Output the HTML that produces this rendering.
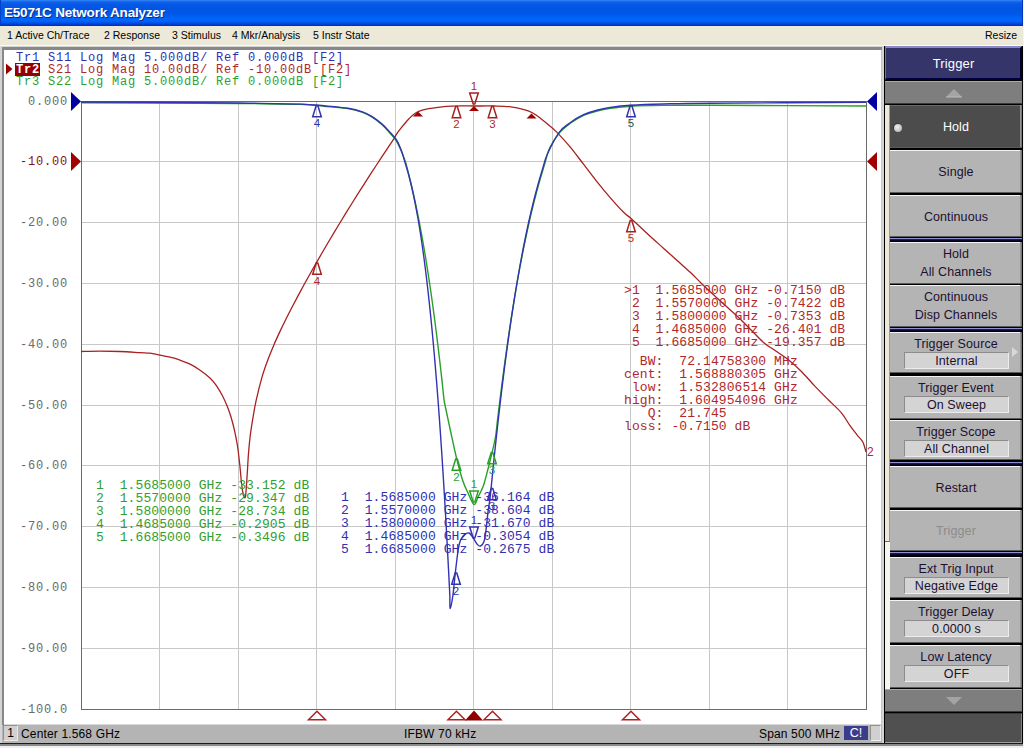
<!DOCTYPE html><html><head><meta charset="utf-8"><style>
*{margin:0;padding:0;box-sizing:border-box}
html,body{width:1024px;height:748px;overflow:hidden;background:#fff;font-family:"Liberation Sans",sans-serif}
.a{position:absolute}
#title{left:0;top:0;width:1024px;height:26px;background:linear-gradient(#3b8cf5 0px,#1e6cf0 1px,#0a5ce8 3px,#0055e3 8px,#0058e8 14px,#0063f8 18px,#0066fd 21px,#0050e0 23px,#0036c8 25px,#0030b0 26px)}
#title span{position:absolute;left:4px;top:5px;color:#fff;font-weight:bold;font-size:13.5px;letter-spacing:-0.2px;text-shadow:1px 1px 0 #0a2c8c;white-space:nowrap}
#menu{left:0;top:26px;width:1024px;height:19px;background:#ece9d8}
#menu span{position:absolute;top:3px;font-size:10.5px;color:#000;white-space:nowrap}
.mono{position:absolute;font-family:"Liberation Mono",monospace;font-size:12px;letter-spacing:0.7px;white-space:pre;line-height:13px}
.b{position:absolute;left:890px;width:132px;background:#b4b4b4;color:#1c1030;font-size:12.5px;letter-spacing:0.1px;text-align:center;white-space:nowrap}
.b .t{position:absolute;left:0;right:0;top:0;height:1px;background:#f4f4f4}
.b .r{position:absolute;right:0;top:0;bottom:0;width:2px;background:linear-gradient(90deg,#a0a0a0,#6a6a6a)}
.b .d{position:absolute;left:0;right:0;bottom:0;height:1px;background:#5a5a5a}
.b .l1{position:absolute;left:0;right:0;white-space:nowrap}
.v{position:absolute;left:14px;width:105px;height:17px;background:#d4d4d4;border-top:1px solid #8c8c8c;border-left:1px solid #8c8c8c;border-bottom:1px solid #ececec;border-right:1px solid #ececec;line-height:17px}
</style></head><body>
<div id="title" class="a"><div style="position:absolute;left:0;top:0;width:1px;height:26px;background:#0040c8"></div><span>E5071C Network Analyzer</span></div>
<div id="menu" class="a">
<span style="left:7px">1 Active Ch/Trace</span>
<span style="left:104px">2 Response</span>
<span style="left:172px">3 Stimulus</span>
<span style="left:232px">4 Mkr/Analysis</span>
<span style="left:313px">5 Instr State</span>
<span style="left:985px">Resize</span>
</div>
<div class="a" style="left:0;top:45px;width:884px;height:703px;background:#d4d4d4"></div>
<div class="a" style="left:0;top:45px;width:884px;height:1px;background:#fafafa"></div>
<div class="a" style="left:2px;top:47px;width:880px;height:695px;background:#888"></div>
<div class="a" style="left:4px;top:50px;width:877px;height:674px;background:#fff"></div>
<div class="a" style="left:881px;top:50px;width:1px;height:692px;background:#c8c8c8"></div>
<div class="a" style="left:4px;top:724px;width:877px;height:1px;background:#d8d8d8"></div>
<div class="a" style="left:2px;top:725px;width:880px;height:18px;background:#b4b4b4"></div>
<div class="a" style="left:0;top:743px;width:1024px;height:1px;background:#1a1a1a"></div>
<div class="a" style="left:0;top:744px;width:1024px;height:2px;background:#8a8a8a"></div>
<div class="a" style="left:0;top:746px;width:1024px;height:2px;background:#f0f0f0"></div>
<div class="a" style="left:884px;top:45px;width:140px;height:1px;background:#fafafa"></div>
<div class="a" style="left:884px;top:46px;width:139px;height:697px;background:#000"></div>
<div class="a" style="left:1023px;top:46px;width:1px;height:697px;background:#f0f0f0"></div>
<div class="a" style="left:885px;top:46px;width:137px;height:34px;background:#35356a;border-top:2px solid #8a8ac8;border-left:1px solid #7070b0;border-bottom:2px solid #000040;border-right:2px solid #000030"></div>
<div class="a" style="left:885px;top:56px;width:137px;text-align:center;color:#fff;font-size:13px;letter-spacing:0.15px">Trigger</div>
<div class="a" style="left:885px;top:81px;width:137px;height:23px;background:#7e7e7e;border-top:1px solid #a8a8a8;border-bottom:1px solid #3a3a3a"></div>
<svg class="a" style="left:945px;top:88px" width="18" height="10"><polygon points="1,9 9,1 17,9" fill="#a4a4a4"/><line x1="1" y1="9" x2="17" y2="9" stroke="#bcbcbc" stroke-width="1"/></svg>
<div class="a" style="left:885px;top:105px;width:5px;height:584px;background:#f6f5ee"></div>
<div class="a" style="left:885px;top:105px;width:5px;height:437px;background:#ece9d8;border-right:1px solid #9a9a90;border-bottom:1px solid #6a6a60"></div>
<div class="a" style="left:890px;top:238px;width:132px;height:1px;background:#9090d0"></div>
<div class="a" style="left:890px;top:239px;width:132px;height:2px;background:linear-gradient(#20206a,#000010)"></div>
<div class="a" style="left:890px;top:328px;width:132px;height:1px;background:#9090d0"></div>
<div class="a" style="left:890px;top:329px;width:132px;height:2px;background:linear-gradient(#20206a,#000010)"></div>
<div class="a" style="left:890px;top:462px;width:132px;height:1px;background:#9090d0"></div>
<div class="a" style="left:890px;top:463px;width:132px;height:2px;background:linear-gradient(#20206a,#000010)"></div>
<div class="a" style="left:890px;top:552px;width:132px;height:1px;background:#9090d0"></div>
<div class="a" style="left:890px;top:553px;width:132px;height:2px;background:linear-gradient(#20206a,#000010)"></div>
<div class="b" style="top:105px;height:43px;background:#4c4c4c;color:#ffffff"><div class="t" style="background:#6a6a6a"></div><div class="r"></div><div class="d"></div><div class="l1" style="top:1px;line-height:43px">Hold</div><div style="position:absolute;left:4px;top:19px;width:8px;height:8px;border-radius:50%;background:radial-gradient(circle at 40% 40%,#f0f0f0,#c8c8c8 55%,#9a9a9a);box-shadow:-0.5px -0.5px 0 #202020"></div></div>
<div class="b" style="top:150px;height:43px;background:#b4b4b4;color:#1c1030"><div class="t" style="background:#f4f4f4"></div><div class="r"></div><div class="d"></div><div class="l1" style="top:1px;line-height:43px">Single</div></div>
<div class="b" style="top:195px;height:42px;background:#b4b4b4;color:#1c1030"><div class="t" style="background:#f4f4f4"></div><div class="r"></div><div class="d"></div><div class="l1" style="top:1px;line-height:42px">Continuous</div></div>
<div class="b" style="top:242px;height:42px;background:#b4b4b4;color:#1c1030"><div class="t" style="background:#f4f4f4"></div><div class="r"></div><div class="d"></div><div class="l1" style="top:5px">Hold</div><div class="l1" style="top:23px">All Channels</div></div>
<div class="b" style="top:285px;height:42px;background:#b4b4b4;color:#1c1030"><div class="t" style="background:#f4f4f4"></div><div class="r"></div><div class="d"></div><div class="l1" style="top:5px">Continuous</div><div class="l1" style="top:23px">Disp Channels</div></div>
<div class="b" style="top:332px;height:41px;background:#b4b4b4;color:#1c1030"><div class="t" style="background:#f4f4f4"></div><div class="r"></div><div class="d"></div><div class="l1" style="top:5px">Trigger Source</div><div class="v" style="top:20px">Internal</div></div>
<div class="b" style="top:376px;height:43px;background:#b4b4b4;color:#1c1030"><div class="t" style="background:#f4f4f4"></div><div class="r"></div><div class="d"></div><div class="l1" style="top:5px">Trigger Event</div><div class="v" style="top:20px">On Sweep</div></div>
<div class="b" style="top:420px;height:40px;background:#b4b4b4;color:#1c1030"><div class="t" style="background:#f4f4f4"></div><div class="r"></div><div class="d"></div><div class="l1" style="top:5px">Trigger Scope</div><div class="v" style="top:20px">All Channel</div></div>
<div class="b" style="top:466px;height:42px;background:#b4b4b4;color:#1c1030"><div class="t" style="background:#f4f4f4"></div><div class="r"></div><div class="d"></div><div class="l1" style="top:1px;line-height:42px">Restart</div></div>
<div class="b" style="top:510px;height:41px;background:#b4b4b4;color:#8c8c8c"><div class="t" style="background:#f4f4f4"></div><div class="r"></div><div class="d"></div><div class="l1" style="top:1px;line-height:41px">Trigger</div></div>
<div class="b" style="top:557px;height:41px;background:#b4b4b4;color:#1c1030"><div class="t" style="background:#f4f4f4"></div><div class="r"></div><div class="d"></div><div class="l1" style="top:5px">Ext Trig Input</div><div class="v" style="top:20px">Negative Edge</div></div>
<div class="b" style="top:600px;height:43px;background:#b4b4b4;color:#1c1030"><div class="t" style="background:#f4f4f4"></div><div class="r"></div><div class="d"></div><div class="l1" style="top:5px">Trigger Delay</div><div class="v" style="top:20px">0.0000 s</div></div>
<div class="b" style="top:645px;height:43px;background:#b4b4b4;color:#1c1030"><div class="t" style="background:#f4f4f4"></div><div class="r"></div><div class="d"></div><div class="l1" style="top:5px">Low Latency</div><div class="v" style="top:20px">OFF</div></div>
<svg class="a" style="left:1011px;top:346px" width="8" height="12"><polygon points="1,1 7,6 1,11" fill="#d8d8d8"/></svg>
<div class="a" style="left:885px;top:689px;width:137px;height:23px;background:#7e7e7e;border-top:1px solid #a8a8a8;border-bottom:1px solid #3a3a3a"></div>
<svg class="a" style="left:945px;top:696px" width="18" height="10"><polygon points="1,1 9,9 17,1" fill="#a4a4a4"/></svg>
<div class="a" style="left:885px;top:713px;width:137px;height:30px;background:#505050;border-top:1px solid #3a3a3a;border-bottom:1px solid #a0a0a0;border-right:1px solid #808080"></div>
<div class="a" style="left:1022px;top:0;width:1px;height:26px;background:#0030c0"></div>
<div class="a" style="left:1023px;top:0;width:1px;height:748px;background:#f4f4f4"></div>
<div class="a" style="left:3px;top:725px;width:15px;height:16px;background:#d0d0d0;border:1px solid #e8e8e8;border-top-color:#909090;border-left-color:#909090;font-size:12px;line-height:14px;text-align:center;color:#000">1</div>
<div class="a" style="left:21px;top:727px;font-size:12px;letter-spacing:0.15px;color:#000;white-space:nowrap">Center 1.568 GHz</div>
<div class="a" style="left:404px;top:727px;font-size:12px;letter-spacing:0.15px;color:#000;white-space:nowrap">IFBW 70 kHz</div>
<div class="a" style="left:759px;top:727px;font-size:12px;letter-spacing:0.15px;color:#000;white-space:nowrap">Span 500 MHz</div>
<div class="a" style="left:844px;top:726px;width:24px;height:14px;background:#3c3c8c;color:#fff;font-size:12.5px;line-height:14px;text-align:center">C!</div>
<div class="a" style="left:870px;top:725px;width:11px;height:16px;background:#d0d0d0;border:1px solid #f0f0f0;border-top-color:#909090;border-left-color:#909090"></div>
<svg class="a" style="left:0;top:0" width="1024" height="748" font-family="Liberation Mono, monospace" style="white-space:pre">
<path d="M159.5 101 V709 M238.5 101 V709 M316.5 101 V709 M395.5 101 V709 M473.5 101 V709 M552.5 101 V709 M630.5 101 V709 M709.5 101 V709 M787.5 101 V709 M81 161.5 H866 M81 222.5 H866 M81 283.5 H866 M81 344.5 H866 M81 405.5 H866 M81 465.5 H866 M81 526.5 H866 M81 587.5 H866 M81 648.5 H866" stroke="#c8c8c8" stroke-width="1" fill="none" shape-rendering="crispEdges"/>
<rect x="81.5" y="101.5" width="785" height="608" fill="none" stroke="#6a6a6a" stroke-width="1" shape-rendering="crispEdges"/>
<text x="68" y="105" fill="#6a6a6a" font-size="12" letter-spacing="0.8" text-anchor="end">0.000</text>
<text x="68" y="165" fill="#8a1010" font-size="12" letter-spacing="0.8" text-anchor="end">-10.00</text>
<text x="68" y="226" fill="#6a6a6a" font-size="12" letter-spacing="0.8" text-anchor="end">-20.00</text>
<text x="68" y="287" fill="#6a6a6a" font-size="12" letter-spacing="0.8" text-anchor="end">-30.00</text>
<text x="68" y="348" fill="#6a6a6a" font-size="12" letter-spacing="0.8" text-anchor="end">-40.00</text>
<text x="68" y="409" fill="#6a6a6a" font-size="12" letter-spacing="0.8" text-anchor="end">-50.00</text>
<text x="68" y="469" fill="#6a6a6a" font-size="12" letter-spacing="0.8" text-anchor="end">-60.00</text>
<text x="68" y="530" fill="#6a6a6a" font-size="12" letter-spacing="0.8" text-anchor="end">-70.00</text>
<text x="68" y="591" fill="#6a6a6a" font-size="12" letter-spacing="0.8" text-anchor="end">-80.00</text>
<text x="68" y="652" fill="#6a6a6a" font-size="12" letter-spacing="0.8" text-anchor="end">-90.00</text>
<text x="68" y="713" fill="#6a6a6a" font-size="12" letter-spacing="0.8" text-anchor="end">-100.0</text>
<rect x="15" y="63" width="25" height="13" fill="#960000"/>
<polygon points="6,63.5 6,74.5 12.5,69" fill="#960000"/>
<text x="16" y="61" fill="#3030b0" font-size="12" letter-spacing="0.8">Tr1&#160;S11&#160;Log&#160;Mag&#160;5.000dB/&#160;Ref&#160;0.000dB&#160;[F2]</text>
<text x="16" y="73" fill="#ffffff" font-size="12" letter-spacing="0.8" font-weight="bold">Tr2</text>
<text x="48" y="73" fill="#b02828" font-size="12" letter-spacing="0.8">S21&#160;Log&#160;Mag&#160;10.00dB/&#160;Ref&#160;-10.00dB&#160;[F2]</text>
<text x="16" y="85" fill="#30a030" font-size="12" letter-spacing="0.8">Tr3&#160;S22&#160;Log&#160;Mag&#160;5.000dB/&#160;Ref&#160;0.000dB&#160;[F2]</text>
<path fill="none" stroke="#a82020" stroke-width="1.3" stroke-linejoin="round" d="M81.00 351.50 C84.17 351.45 93.50 351.20 100.00 351.20 C106.50 351.20 113.33 351.27 120.00 351.50 C126.67 351.73 135.00 352.32 140.00 352.60 C145.00 352.88 146.67 352.77 150.00 353.20 C153.33 353.63 156.65 354.53 160.00 355.20 C163.35 355.87 166.75 356.37 170.10 357.20 C173.45 358.03 176.77 359.03 180.10 360.20 C183.43 361.37 186.77 362.53 190.10 364.20 C193.43 365.87 196.75 367.87 200.10 370.20 C203.45 372.53 207.52 375.68 210.20 378.20 C212.88 380.72 214.20 382.45 216.20 385.30 C218.20 388.15 220.37 391.80 222.20 395.30 C224.03 398.80 225.73 402.68 227.20 406.30 C228.67 409.92 229.77 412.92 231.00 417.00 C232.23 421.08 233.52 425.97 234.60 430.80 C235.68 435.63 236.63 440.30 237.50 446.00 C238.37 451.70 239.13 458.83 239.80 465.00 C240.47 471.17 240.92 478.00 241.50 483.00 C242.08 488.00 242.80 492.58 243.30 495.00 C243.80 497.42 244.10 497.50 244.50 497.50 C244.90 497.50 245.25 498.87 245.70 495.00 C246.15 491.13 246.73 481.23 247.20 474.30 C247.67 467.37 248.00 459.78 248.50 453.40 C249.00 447.02 249.48 441.78 250.20 436.00 C250.92 430.22 251.83 424.51 252.80 418.70 C253.77 412.89 254.47 408.06 256.00 401.12 C257.53 394.18 260.00 384.02 262.00 377.07 C264.00 370.12 266.00 364.83 268.00 359.43 C270.00 354.03 272.00 349.33 274.00 344.66 C276.00 339.99 278.00 335.67 280.00 331.39 C282.00 327.12 284.00 323.05 286.00 319.02 C288.00 314.99 290.00 311.09 292.00 307.23 C294.00 303.37 296.00 299.59 298.00 295.85 C300.00 292.11 302.00 288.44 304.00 284.79 C306.00 281.15 308.00 277.55 310.00 273.99 C312.00 270.42 314.00 266.90 316.00 263.40 C318.00 259.90 320.00 256.44 322.00 253.00 C324.00 249.56 326.00 246.15 328.00 242.76 C330.00 239.38 332.00 236.02 334.00 232.68 C336.00 229.35 338.00 226.04 340.00 222.75 C342.00 219.46 344.00 216.19 346.00 212.95 C348.00 209.70 350.00 206.48 352.00 203.27 C354.00 200.07 356.00 196.89 358.00 193.72 C360.00 190.56 362.00 187.41 364.00 184.29 C366.00 181.16 368.00 178.05 370.00 174.96 C372.00 171.88 374.00 168.80 376.00 165.75 C378.00 162.70 380.00 159.66 382.00 156.64 C384.00 153.62 386.00 150.62 388.00 147.63 C390.00 144.64 392.63 140.87 394.00 138.72 C395.37 136.56 395.20 136.25 396.20 134.70 C397.20 133.15 398.07 131.85 400.00 129.40 C401.93 126.95 405.20 122.73 407.80 120.00 C410.40 117.27 413.00 114.70 415.60 113.00 C418.20 111.30 420.79 110.58 423.40 109.80 C426.01 109.02 427.33 108.87 431.25 108.30 C435.17 107.73 441.69 106.80 446.90 106.40 C452.11 106.00 457.98 105.97 462.50 105.90 C467.02 105.83 468.79 105.98 474.00 106.00 C479.21 106.02 487.85 105.88 493.75 106.00 C499.65 106.12 504.19 106.07 509.40 106.70 C514.61 107.33 521.10 108.75 525.00 109.80 C528.90 110.85 530.20 111.57 532.80 113.00 C535.40 114.43 538.00 116.45 540.60 118.40 C543.20 120.35 545.72 122.42 548.40 124.70 C551.08 126.98 553.08 128.42 556.70 132.10 C560.32 135.78 565.63 141.45 570.10 146.80 C574.57 152.15 579.03 158.40 583.50 164.20 C587.97 170.00 592.45 176.03 596.90 181.60 C601.35 187.17 605.75 192.48 610.20 197.60 C614.65 202.72 620.03 208.73 623.60 212.30 C627.17 215.87 627.13 214.98 631.60 219.00 C636.07 223.02 645.05 231.50 650.40 236.40 C655.75 241.30 659.25 244.38 663.70 248.40 C668.15 252.42 672.63 256.48 677.10 260.50 C681.57 264.52 686.48 268.72 690.50 272.50 C694.52 276.28 697.50 279.60 701.20 283.20 C704.90 286.80 708.67 290.37 712.70 294.10 C716.73 297.83 721.17 301.78 725.40 305.60 C729.63 309.42 733.87 312.98 738.10 317.00 C742.33 321.02 746.57 325.47 750.80 329.70 C755.03 333.93 759.27 338.80 763.50 342.40 C767.73 346.00 771.95 348.33 776.20 351.30 C780.45 354.27 784.75 356.80 789.00 360.20 C793.25 363.60 797.47 367.47 801.70 371.70 C805.93 375.93 810.02 380.97 814.40 385.60 C818.78 390.23 823.50 394.97 828.00 399.50 C832.50 404.03 837.73 408.43 841.40 412.80 C845.07 417.17 847.33 421.95 850.00 425.70 C852.67 429.45 855.27 432.58 857.40 435.30 C859.53 438.02 861.37 439.22 862.80 442.00 C864.23 444.78 865.47 450.33 866.00 452.00"/>
<path fill="none" stroke="#28a028" stroke-width="1.4" stroke-linejoin="round" d="M81.00 102.80 C100.83 102.88 171.83 103.17 200.00 103.30 C228.17 103.43 233.33 103.43 250.00 103.60 C266.67 103.77 287.67 103.87 300.00 104.30 C312.33 104.73 315.98 105.48 324.00 106.20 C332.02 106.92 341.68 107.58 348.10 108.60 C354.52 109.62 358.48 110.87 362.50 112.30 C366.52 113.73 368.98 115.15 372.20 117.20 C375.42 119.25 379.00 122.13 381.80 124.60 C384.60 127.07 386.60 129.35 389.00 132.00 C391.40 134.65 394.20 137.42 396.20 140.50 C398.20 143.58 399.45 146.92 401.00 150.50 C402.55 154.08 404.12 157.75 405.48 162.00 C406.83 166.25 407.95 171.33 409.12 176.00 C410.29 180.67 411.41 185.33 412.49 190.00 C413.57 194.67 414.60 199.33 415.60 204.00 C416.60 208.67 417.55 213.33 418.47 218.00 C419.40 222.67 420.28 227.33 421.14 232.00 C422.01 236.67 422.83 241.33 423.64 246.00 C424.45 250.67 425.23 255.33 425.99 260.00 C426.75 264.67 427.48 269.33 428.20 274.00 C428.92 278.67 429.62 283.33 430.30 288.00 C430.98 292.67 431.64 297.33 432.29 302.00 C432.94 306.67 433.57 311.33 434.19 316.00 C434.81 320.67 435.41 325.33 436.00 330.00 C436.60 334.67 437.17 339.33 437.74 344.00 C438.31 348.67 438.87 353.33 439.41 358.00 C439.96 362.67 440.49 367.33 441.02 372.00 C441.54 376.67 442.06 381.33 442.57 386.00 C443.07 390.67 443.62 396.67 444.06 400.00 C444.50 403.33 444.16 401.00 445.20 406.00 C446.24 411.00 448.42 421.33 450.30 430.00 C452.18 438.67 454.43 449.58 456.50 458.00 C458.57 466.42 460.78 474.67 462.70 480.50 C464.62 486.33 466.12 489.00 468.00 493.00 C469.88 497.00 472.33 503.83 474.00 504.50 C475.67 505.17 476.48 499.98 478.00 497.00 C479.52 494.02 481.43 491.27 483.10 486.60 C484.77 481.93 486.42 475.03 488.00 469.00 C489.58 462.97 491.33 455.90 492.60 450.40 C493.87 444.90 494.81 441.07 495.62 436.00 C496.44 430.93 496.86 425.33 497.49 420.00 C498.12 414.67 498.76 409.33 499.42 404.00 C500.08 398.67 500.75 393.33 501.43 388.00 C502.11 382.67 502.81 377.33 503.52 372.00 C504.23 366.67 504.95 361.33 505.70 356.00 C506.44 350.67 507.20 345.33 507.97 340.00 C508.75 334.67 509.54 329.33 510.36 324.00 C511.17 318.67 512.01 313.33 512.87 308.00 C513.72 302.67 514.60 297.33 515.51 292.00 C516.42 286.67 517.34 281.33 518.31 276.00 C519.27 270.67 520.25 265.33 521.28 260.00 C522.30 254.67 523.36 249.33 524.45 244.00 C525.55 238.67 526.68 233.33 527.86 228.00 C529.04 222.67 530.26 217.33 531.54 212.00 C532.83 206.67 534.15 201.33 535.55 196.00 C536.94 190.67 538.40 185.33 539.92 180.00 C541.45 174.67 543.07 169.33 544.69 164.00 C546.32 158.67 547.18 153.23 549.67 148.00 C552.15 142.77 556.16 136.72 559.60 132.60 C563.04 128.48 566.28 126.17 570.30 123.30 C574.32 120.43 579.23 117.45 583.70 115.40 C588.17 113.35 592.65 112.17 597.10 111.00 C601.55 109.83 604.75 109.20 610.40 108.40 C616.05 107.60 622.12 106.70 631.00 106.20 C639.88 105.70 650.53 105.55 663.70 105.40 C676.87 105.25 676.28 105.20 710.00 105.30 C743.72 105.40 840.00 105.88 866.00 106.00"/>
<path fill="none" stroke="#3232b2" stroke-width="1.4" stroke-linejoin="round" d="M81.00 102.00 C100.83 102.10 171.83 102.40 200.00 102.60 C228.17 102.80 233.33 102.95 250.00 103.20 C266.67 103.45 287.67 103.67 300.00 104.10 C312.33 104.53 315.98 105.12 324.00 105.80 C332.02 106.48 341.68 107.20 348.10 108.20 C354.52 109.20 358.48 110.40 362.50 111.80 C366.52 113.20 368.98 114.58 372.20 116.60 C375.42 118.62 379.00 121.48 381.80 123.90 C384.60 126.32 386.60 128.50 389.00 131.10 C391.40 133.70 394.20 136.43 396.20 139.50 C398.20 142.57 399.55 145.75 401.00 149.50 C402.45 153.25 403.56 157.58 404.89 162.00 C406.23 166.42 407.74 171.33 408.98 176.00 C410.23 180.67 411.33 185.33 412.38 190.00 C413.44 194.67 414.39 199.33 415.31 204.00 C416.23 208.67 417.08 213.33 417.89 218.00 C418.71 222.67 419.47 227.33 420.20 232.00 C420.94 236.67 421.63 241.33 422.30 246.00 C422.97 250.67 423.61 255.33 424.23 260.00 C424.84 264.67 425.43 269.33 426.01 274.00 C426.58 278.67 427.13 283.33 427.66 288.00 C428.20 292.67 428.71 297.33 429.21 302.00 C429.72 306.67 430.20 311.33 430.67 316.00 C431.15 320.67 431.60 325.33 432.05 330.00 C432.50 334.67 432.93 339.33 433.36 344.00 C433.78 348.67 434.19 353.33 434.60 358.00 C435.00 362.67 435.40 367.33 435.78 372.00 C436.17 376.67 436.55 381.33 436.92 386.00 C437.29 390.67 437.65 395.33 438.00 400.00 C438.36 404.67 438.70 409.33 439.05 414.00 C439.39 418.67 439.72 423.33 440.05 428.00 C440.38 432.67 440.70 437.33 441.01 442.00 C441.33 446.67 441.64 451.33 441.95 456.00 C442.25 460.67 442.55 465.33 442.85 470.00 C443.14 474.67 443.43 479.33 443.72 484.00 C444.01 488.67 444.29 493.33 444.57 498.00 C444.84 502.67 445.12 507.33 445.39 512.00 C445.66 516.67 445.92 521.33 446.18 526.00 C446.44 530.67 446.70 535.33 446.96 540.00 C447.21 544.67 447.46 549.33 447.71 554.00 C447.96 558.67 448.20 563.33 448.44 568.00 C448.68 572.67 448.92 577.33 449.16 582.00 C449.39 586.67 449.68 591.58 449.85 596.00 C450.03 600.42 449.69 608.60 450.20 608.50 C450.71 608.40 452.07 601.18 452.90 595.40 C453.73 589.62 454.30 581.53 455.20 573.80 C456.10 566.07 457.40 554.63 458.30 549.00 C459.20 543.37 459.57 542.40 460.60 540.00 C461.63 537.60 463.10 535.77 464.50 534.60 C465.90 533.43 467.58 532.48 469.00 533.00 C470.42 533.52 471.58 535.77 473.00 537.70 C474.42 539.63 476.23 543.22 477.50 544.60 C478.77 545.98 479.52 546.52 480.60 546.00 C481.68 545.48 483.10 544.17 484.00 541.50 C484.90 538.83 485.33 534.92 486.00 530.00 C486.67 525.08 487.37 517.00 488.00 512.00 C488.63 507.00 489.31 503.67 489.80 500.00 C490.29 496.33 490.47 494.33 490.92 490.00 C491.37 485.67 491.96 479.33 492.50 474.00 C493.03 468.67 493.58 463.33 494.13 458.00 C494.68 452.67 495.25 447.33 495.82 442.00 C496.39 436.67 496.97 431.33 497.57 426.00 C498.16 420.67 498.77 415.33 499.38 410.00 C500.00 404.67 500.62 399.33 501.27 394.00 C501.91 388.67 502.56 383.33 503.23 378.00 C503.89 372.67 504.57 367.33 505.27 362.00 C505.97 356.67 506.68 351.33 507.41 346.00 C508.14 340.67 508.89 335.33 509.65 330.00 C510.42 324.67 511.20 319.33 512.01 314.00 C512.82 308.67 513.64 303.33 514.49 298.00 C515.35 292.67 516.22 287.33 517.13 282.00 C518.03 276.67 518.96 271.33 519.93 266.00 C520.89 260.67 521.89 255.33 522.92 250.00 C523.96 244.67 525.02 239.33 526.14 234.00 C527.26 228.67 528.41 223.33 529.63 218.00 C530.84 212.67 532.10 207.33 533.43 202.00 C534.76 196.67 536.15 191.33 537.62 186.00 C539.09 180.67 540.64 175.33 542.27 170.00 C543.90 164.67 544.54 160.32 547.40 154.00 C550.26 147.68 555.62 137.32 559.40 132.10 C563.18 126.88 566.08 125.60 570.10 122.70 C574.12 119.80 579.03 116.78 583.50 114.70 C587.97 112.62 592.45 111.40 596.90 110.20 C601.35 109.00 604.55 108.32 610.20 107.50 C615.85 106.68 621.88 105.88 630.80 105.30 C639.72 104.72 650.50 104.35 663.70 104.00 C676.90 103.65 676.28 103.48 710.00 103.20 C743.72 102.92 840.00 102.45 866.00 102.30"/>
<polygon points="71,92 71,111 81,101.5" fill="#0000a0"/>
<polygon points="71,152 71,171 81,161.5" fill="#a00000"/>
<polygon points="877,92 877,111 867,101.5" fill="#0000a0"/>
<polygon points="877,152 877,171 867,161.5" fill="#a00000"/>
<polygon points="455.7,459.0 457.3,459.0 460.8,470.3 452.2,470.3" fill="none" stroke="#28a028" stroke-width="1.5" stroke-linejoin="miter"/><text x="456.5" y="480.5" fill="#30a030" font-size="11.5" font-family="Liberation Sans, sans-serif" text-anchor="middle">2</text>
<polygon points="491.2,452.5 492.8,452.5 496.3,463.8 487.7,463.8" fill="none" stroke="#28a028" stroke-width="1.5" stroke-linejoin="miter"/><text x="492.0" y="474.0" fill="#30a030" font-size="11.5" font-family="Liberation Sans, sans-serif" text-anchor="middle">3</text>
<polygon points="473.2,502.0 474.8,502.0 478.3,491.0 469.7,491.0" fill="none" stroke="#28a028" stroke-width="1.5" stroke-linejoin="miter"/><text x="474.0" y="487.5" fill="#30a030" font-size="11.5" font-family="Liberation Sans, sans-serif" text-anchor="middle">1</text>
<polygon points="473.2,104.0 474.8,104.0 478.3,93.0 469.7,93.0" fill="none" stroke="#a82020" stroke-width="1.5" stroke-linejoin="miter"/><text x="474.0" y="89.5" fill="#b02828" font-size="11.5" font-family="Liberation Sans, sans-serif" text-anchor="middle">1</text>
<polygon points="455.7,106.5 457.3,106.5 460.8,117.8 452.2,117.8" fill="none" stroke="#a82020" stroke-width="1.5" stroke-linejoin="miter"/><text x="456.5" y="128.0" fill="#b02828" font-size="11.5" font-family="Liberation Sans, sans-serif" text-anchor="middle">2</text>
<polygon points="491.7,106.5 493.3,106.5 496.8,117.8 488.2,117.8" fill="none" stroke="#a82020" stroke-width="1.5" stroke-linejoin="miter"/><text x="492.5" y="128.0" fill="#b02828" font-size="11.5" font-family="Liberation Sans, sans-serif" text-anchor="middle">3</text>
<polygon points="316.2,263.0 317.8,263.0 321.3,274.3 312.7,274.3" fill="none" stroke="#a82020" stroke-width="1.5" stroke-linejoin="miter"/><text x="317.0" y="284.5" fill="#b02828" font-size="11.5" font-family="Liberation Sans, sans-serif" text-anchor="middle">4</text>
<polygon points="630.2,220.5 631.8,220.5 635.3,231.8 626.7,231.8" fill="none" stroke="#a82020" stroke-width="1.5" stroke-linejoin="miter"/><text x="631.0" y="242.0" fill="#b02828" font-size="11.5" font-family="Liberation Sans, sans-serif" text-anchor="middle">5</text>
<polygon points="418.0,111.5 413.0,116.5 423.0,116.5" fill="#a00000"/>
<polygon points="531.5,113.5 526.5,118.5 536.5,118.5" fill="#a00000"/>
<polygon points="474.0,106.0 469.0,111.0 479.0,111.0" fill="#a00000"/>
<polygon points="316.2,105.5 317.8,105.5 321.3,116.8 312.7,116.8" fill="none" stroke="#3232b2" stroke-width="1.5" stroke-linejoin="miter"/><text x="317.0" y="127.0" fill="#3030b0" font-size="11.5" font-family="Liberation Sans, sans-serif" text-anchor="middle">4</text>
<polygon points="630.2,105.5 631.8,105.5 635.3,116.8 626.7,116.8" fill="none" stroke="#3232b2" stroke-width="1.5" stroke-linejoin="miter"/><text x="631.0" y="127.0" fill="#205060" font-size="11.5" font-family="Liberation Sans, sans-serif" text-anchor="middle">5</text>
<polygon points="473.2,538.0 474.8,538.0 478.3,527.0 469.7,527.0" fill="none" stroke="#3232b2" stroke-width="1.5" stroke-linejoin="miter"/><text x="474.0" y="523.5" fill="#3030b0" font-size="11.5" font-family="Liberation Sans, sans-serif" text-anchor="middle">1</text>
<polygon points="455.2,573.0 456.8,573.0 460.3,584.3 451.7,584.3" fill="none" stroke="#3232b2" stroke-width="1.5" stroke-linejoin="miter"/><text x="456.0" y="594.5" fill="#3030b0" font-size="11.5" font-family="Liberation Sans, sans-serif" text-anchor="middle">2</text>
<polygon points="491.2,488.5 492.8,488.5 496.3,499.8 487.7,499.8" fill="none" stroke="#3232b2" stroke-width="1.5" stroke-linejoin="miter"/><text x="492.0" y="510.0" fill="#3030b0" font-size="11.5" font-family="Liberation Sans, sans-serif" text-anchor="middle">3</text>
<polygon points="317.0,711.3 308.5,719.8 325.5,719.8" fill="none" stroke="#b02020" stroke-width="1.5"/>
<polygon points="456.5,711.3 448.0,719.8 465.0,719.8" fill="none" stroke="#b02020" stroke-width="1.5"/>
<polygon points="492.5,711.3 484.0,719.8 501.0,719.8" fill="none" stroke="#b02020" stroke-width="1.5"/>
<polygon points="631.0,711.3 622.5,719.8 639.5,719.8" fill="none" stroke="#b02020" stroke-width="1.5"/>
<polygon points="474,710.5 465,720.5 483,720.5" fill="#900000"/>
<text x="867" y="455.5" fill="#b02828" font-size="12" font-family="Liberation Sans, sans-serif">2</text>
<text x="96" y="489" fill="#30a030" font-size="13" letter-spacing="0.1">1&#160;&#160;1.5685000&#160;GHz&#160;-33.152&#160;dB</text><text x="96" y="502" fill="#30a030" font-size="13" letter-spacing="0.1">2&#160;&#160;1.5570000&#160;GHz&#160;-29.347&#160;dB</text><text x="96" y="515" fill="#30a030" font-size="13" letter-spacing="0.1">3&#160;&#160;1.5800000&#160;GHz&#160;-28.734&#160;dB</text><text x="96" y="528" fill="#30a030" font-size="13" letter-spacing="0.1">4&#160;&#160;1.4685000&#160;GHz&#160;-0.2905&#160;dB</text><text x="96" y="541" fill="#30a030" font-size="13" letter-spacing="0.1">5&#160;&#160;1.6685000&#160;GHz&#160;-0.3496&#160;dB</text>
<text x="341" y="501" fill="#3030b0" font-size="13" letter-spacing="0.1">1&#160;&#160;1.5685000&#160;GHz&#160;-36.164&#160;dB</text><text x="341" y="514" fill="#3030b0" font-size="13" letter-spacing="0.1">2&#160;&#160;1.5570000&#160;GHz&#160;-38.604&#160;dB</text><text x="341" y="527" fill="#3030b0" font-size="13" letter-spacing="0.1">3&#160;&#160;1.5800000&#160;GHz&#160;-31.670&#160;dB</text><text x="341" y="540" fill="#3030b0" font-size="13" letter-spacing="0.1">4&#160;&#160;1.4685000&#160;GHz&#160;-0.3054&#160;dB</text><text x="341" y="553" fill="#3030b0" font-size="13" letter-spacing="0.1">5&#160;&#160;1.6685000&#160;GHz&#160;-0.2675&#160;dB</text>
<text x="624" y="294" fill="#b02828" font-size="13" letter-spacing="0.1">&gt;1&#160;&#160;1.5685000&#160;GHz&#160;-0.7150&#160;dB</text><text x="624" y="307" fill="#b02828" font-size="13" letter-spacing="0.1">&#160;2&#160;&#160;1.5570000&#160;GHz&#160;-0.7422&#160;dB</text><text x="624" y="320" fill="#b02828" font-size="13" letter-spacing="0.1">&#160;3&#160;&#160;1.5800000&#160;GHz&#160;-0.7353&#160;dB</text><text x="624" y="333" fill="#b02828" font-size="13" letter-spacing="0.1">&#160;4&#160;&#160;1.4685000&#160;GHz&#160;-26.401&#160;dB</text><text x="624" y="346" fill="#b02828" font-size="13" letter-spacing="0.1">&#160;5&#160;&#160;1.6685000&#160;GHz&#160;-19.357&#160;dB</text>
<text x="624" y="365" fill="#b02828" font-size="13" letter-spacing="0.1">&#160;&#160;BW:&#160;&#160;72.14758300&#160;MHz</text><text x="624" y="378" fill="#b02828" font-size="13" letter-spacing="0.1">cent:&#160;&#160;1.568880305&#160;GHz</text><text x="624" y="391" fill="#b02828" font-size="13" letter-spacing="0.1">&#160;low:&#160;&#160;1.532806514&#160;GHz</text><text x="624" y="404" fill="#b02828" font-size="13" letter-spacing="0.1">high:&#160;&#160;1.604954096&#160;GHz</text><text x="624" y="417" fill="#b02828" font-size="13" letter-spacing="0.1">&#160;&#160;&#160;Q:&#160;&#160;21.745</text><text x="624" y="430" fill="#b02828" font-size="13" letter-spacing="0.1">loss:&#160;-0.7150&#160;dB</text>
</svg>
</body></html>
